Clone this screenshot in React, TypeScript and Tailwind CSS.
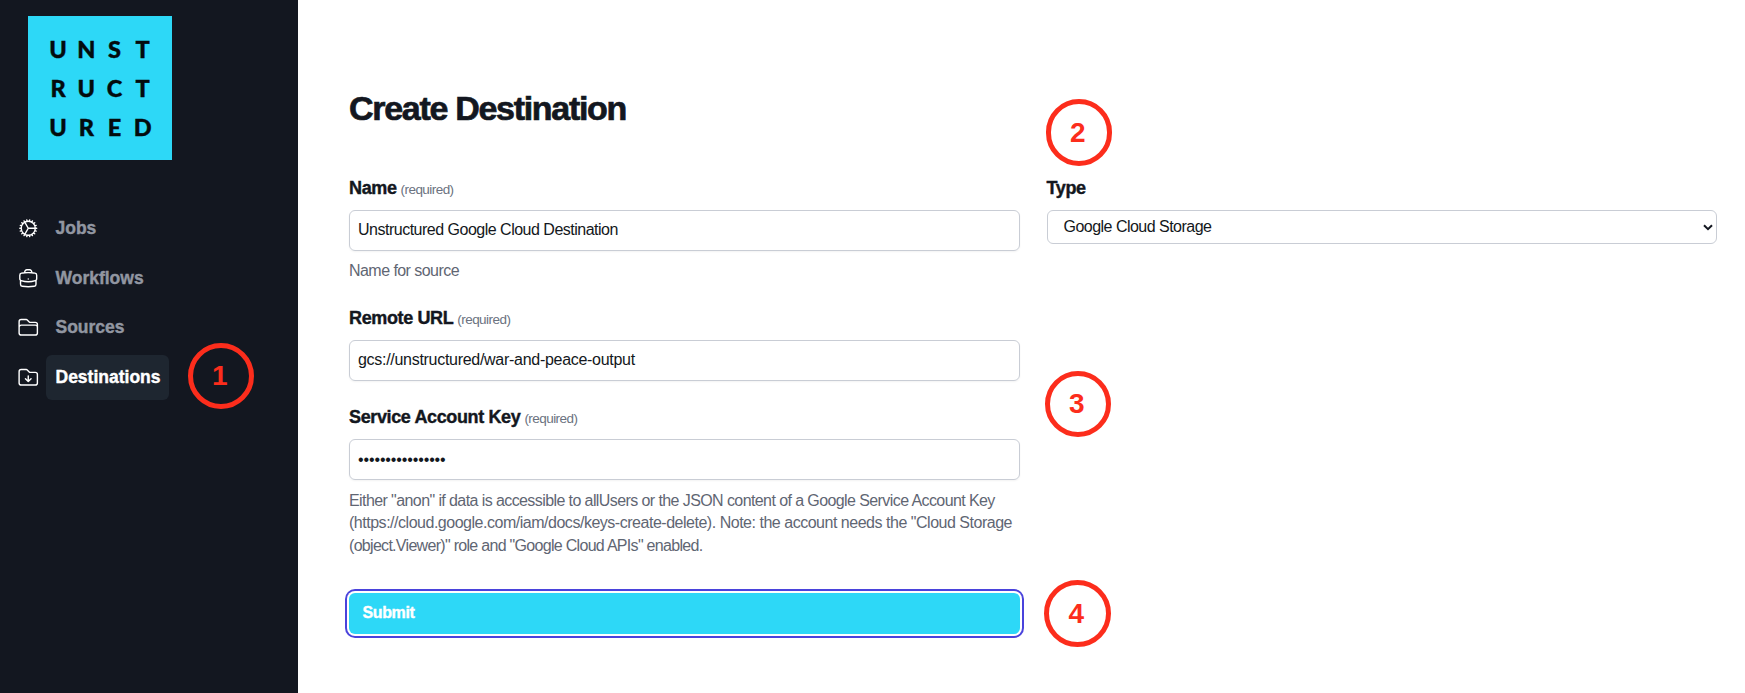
import type { ReactNode } from 'react';
import type { IconType } from 'react-icons';
import {
  HiOutlineCog,
  HiOutlineBriefcase,
  HiOutlineFolder,
  HiOutlineFolderArrowDown,
} from 'react-icons/hi2';

function Logo() {
  return (
    <div className="ml-7 grid h-36 w-36 grid-cols-[repeat(4,28.2px)] grid-rows-[repeat(3,39px)] content-start bg-[#2dd8f7] pt-[14px] pl-4 text-center font-['Lato'] text-[23.5px] leading-[39px] font-black text-[#030b0d] [-webkit-text-stroke:0.4px]">
      {'UNSTRUCTURED'.split('').map((letter, i) => (
        <span key={i}>{letter}</span>
      ))}
    </div>
  );
}

function NavItem({ icon: Icon, label, active }: { icon: IconType; label: string; active?: boolean }) {
  return (
    <a className="flex h-[45px] items-center">
      <Icon className="h-[22.5px] w-[22.5px] text-white" />
      <span
        className={
          active
            ? 'ml-[6px] flex h-[45px] items-center rounded-md bg-[#1e2630] pr-2 pl-[10px] text-white'
            : 'ml-[6px] flex h-[45px] items-center pr-2 pl-[10px] text-[#9196a1]'
        }
      >
        {label}
      </span>
    </a>
  );
}

function Label({ children, required }: { children: ReactNode; required?: boolean }) {
  return (
    <div className="flex h-7 items-baseline text-[18px] leading-7 font-bold tracking-[-0.37px] text-[#131720] [-webkit-text-stroke:0.4px]">
      {children}
      {required && (
        <span className="ml-1 text-[13.5px] font-normal tracking-[-0.55px] text-[#6b7280] [-webkit-text-stroke:0]">
          (required)
        </span>
      )}
    </div>
  );
}

function Field({ children }: { children: ReactNode }) {
  return (
    <div className="mt-2 flex h-[40.5px] items-center rounded-md border border-[#c9cdd5] px-2 text-[16px] text-[#131720] shadow-xs">
      {children}
    </div>
  );
}

function Marker({ n, place }: { n: number; place: string }) {
  return (
    <div
      className={`absolute flex h-[66.5px] w-[66.5px] items-center justify-center rounded-full border-[5.5px] border-[#fc2d1c] pt-px pr-[2px] text-[28px] leading-none font-bold text-[#fc2d1c] ${place}`}
    >
      {n}
    </div>
  );
}

export default function App() {
  return (
    <div className="relative flex h-[693px] w-full overflow-hidden bg-white font-['Liberation_Sans',sans-serif]">
      <aside className="w-[298px] shrink-0 bg-[#131720] pt-4">
        <Logo />
        <nav className="mt-[46px] flex flex-col gap-[4.5px] pl-[17px] text-[17.5px] font-bold [-webkit-text-stroke:0.4px]">
          <NavItem icon={HiOutlineCog} label="Jobs" />
          <NavItem icon={HiOutlineBriefcase} label="Workflows" />
          <NavItem icon={HiOutlineFolder} label="Sources" />
          <NavItem icon={HiOutlineFolderArrowDown} label="Destinations" active />
        </nav>
      </aside>

      <main className="grow pt-[88px] pr-7 pl-[51px]">
        <h1 className="h-10 text-[34px] leading-10 font-bold tracking-[-1.3px] text-[#131720] [-webkit-text-stroke:0.7px]">
          Create Destination
        </h1>
        <div className="mt-[46px] grid grid-cols-2 gap-[27px]">
          <form>
            <Label required>Name</Label>
            <Field>
              <span className="tracking-[-0.5px]">Unstructured Google Cloud Destination</span>
            </Field>
            <p className="mt-[9px] text-[16px] leading-[22.5px] tracking-[-0.55px] text-[#5f6673]">Name for source</p>

            <div className="mt-[22px]">
              <Label required>Remote URL</Label>
              <Field>
                <span className="tracking-[-0.29px]">gcs://unstructured/war-and-peace-output</span>
              </Field>
            </div>

            <div className="mt-[22.5px]">
              <Label required>Service Account Key</Label>
              <Field>
                <span className="pt-0.5 tracking-[-0.13px]">••••••••••••••••</span>
              </Field>
            </div>
            <p className="mt-[10px] flex flex-col text-[16px] leading-[22.5px] whitespace-nowrap text-[#5f6673]">
              <span className="tracking-[-0.59px]">
                Either "anon" if data is accessible to allUsers or the JSON content of a Google Service Account Key
              </span>
              <span className="tracking-[-0.48px]">
                (https://cloud.google.com/iam/docs/keys-create-delete). Note: the account needs the "Cloud Storage
              </span>
              <span className="tracking-[-0.7px]">
                (object.Viewer)" role and "Google Cloud APIs" enabled.
              </span>
            </p>

            <button
              type="button"
              className="mt-[35.5px] flex h-[41px] w-full items-center rounded-md bg-[#2dd8f7] px-[13.5px] pb-px text-[16px] font-bold tracking-[-0.37px] text-white ring-2 ring-[#4a43dc] ring-offset-2 [-webkit-text-stroke:0.4px]"
            >
              Submit
            </button>
          </form>

          <div>
            <Label>Type</Label>
            <div className="mt-2 flex h-[34px] items-center justify-between rounded-md border border-[#c9cdd5] pr-[3px] pl-4 text-[16px] text-[#131720]">
              <span className="tracking-[-0.52px]">Google Cloud Storage</span>
              <svg className="h-[7px] w-[10px]" viewBox="0 0 10 7" fill="none" stroke="#131720" strokeWidth="2">
                <path d="M1 1.2 5 5.2 9 1.2" />
              </svg>
            </div>
          </div>
        </div>
      </main>

      <Marker n={1} place="left-[187.5px] top-[342.5px]" />
      <Marker n={2} place="left-[1045.5px] top-[99px]" />
      <Marker n={3} place="left-[1044.5px] top-[370.5px]" />
      <Marker n={4} place="left-[1044px] top-[580px]" />
    </div>
  );
}
